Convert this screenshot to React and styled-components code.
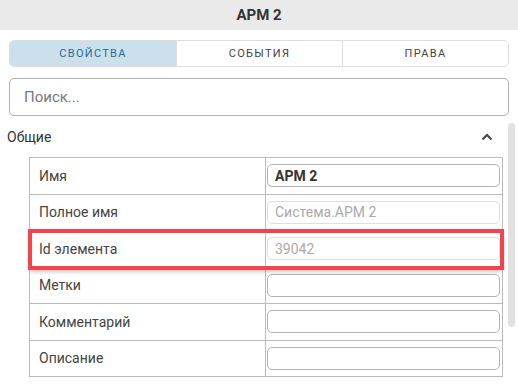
import React from "react";
import styled, { createGlobalStyle } from "styled-components";

const GlobalStyle = createGlobalStyle`
    html, body {
        margin: 0;
        padding: 0;
        background: #fff;
        font-family: Roboto, "Liberation Sans", sans-serif;
        overflow: hidden;
    }
    * {
        box-sizing: border-box;
    }
`;

const Header = styled.div`
    height: 30px;
    background: #eaeaea;
    display: flex;
    align-items: center;
    justify-content: center;
    font-size: 15px;
    font-weight: 700;
    color: #333;
`;
const Top = styled.div`
    padding: 10px 9px 0;
    display: flex;
    flex-direction: column;
    gap: 11px;
`;
const Tabs = styled.div`
    display: grid;
    grid-template-columns: 1fr 1fr 1fr;
    height: 27px;
    border: 1px solid #dddddd;
    border-radius: 5px;
    overflow: hidden;
`;
const Tab = styled.div`
    display: flex;
    align-items: center;
    justify-content: center;
    font-size: 11px;
    letter-spacing: 1.3px;
    text-transform: uppercase;
    color: ${(p) => (p.$active ? "#1e6c9b" : "#444")};
    background: ${(p) => (p.$active ? "#cbe0ea" : "#fff")};
    & + & {
        border-left: 1px solid #dddddd;
    }
`;
const Search = styled.input`
    height: 38px;
    border: 1px solid #b0b0b0;
    border-radius: 5px;
    padding: 0 14px;
    font-family: inherit;
    font-size: 15px;
    color: #333;
    outline: none;
    &::placeholder {
        color: #777;
    }
`;
const ScrollArea = styled.div`
    display: flex;
    margin-top: 7px;
    padding-right: 3px;
`;
const Content = styled.div`
    flex: 1;
    padding-left: 7px;
`;
const Thumb = styled.div`
    width: 7px;
    height: 204px;
    border-radius: 4px;
    background: #e1e1e1;
`;
const SectionHead = styled.div`
    height: 28px;
    display: flex;
    align-items: center;
    justify-content: space-between;
    padding-right: 15px;
    font-size: 14px;
    color: #333;
`;
const Table = styled.div`
    margin: 6px 5px 0 22px;
    border: 1px solid #bbbbbb;
    border-bottom: none;
`;
const Row = styled.div`
    display: grid;
    grid-template-columns: 236px 1fr;
    height: 36.5px;
    border-bottom: 1px solid #bbbbbb;
    position: relative;
    ${(p) =>
        p.$marked &&
        `
        z-index: 1;
        outline: 4px solid #f4434b;
        outline-offset: -2px;
        box-shadow: 0 3px 5px rgba(0, 0, 0, 0.3);
    `}
`;
const Label = styled.div`
    display: flex;
    align-items: center;
    padding-left: 9px;
    border-right: 1px solid #bbbbbb;
    font-size: 14px;
    color: #444;
`;
const Cell = styled.div`
    display: flex;
    align-items: center;
    padding: 0 2px 0 1px;
`;
const Field = styled.input`
    width: 100%;
    height: 23px;
    border-radius: 5px;
    border: 1px solid ${(p) => (p.disabled ? "#dedede" : "#b3b3b3")};
    background: #fff;
    padding: 0 7px;
    font-family: inherit;
    font-size: 14px;
    font-weight: ${(p) => (p.$bold ? 700 : 400)};
    color: ${(p) => (p.disabled ? "#aaa" : "#333")};
    outline: none;
`;

const rows = [
    { label: "Имя", value: "АРМ 2", bold: true },
    { label: "Полное имя", value: "Система.АРМ 2", disabled: true },
    { label: "Id элемента", value: "39042", disabled: true, marked: true },
    { label: "Метки", value: "" },
    { label: "Комментарий", value: "" },
    { label: "Описание", value: "" },
];

function Chevron() {
    return (
        <svg width="12" height="10" viewBox="0 0 12 10">
            <polyline
                points="1.5,7.5 6,3 10.5,7.5"
                fill="none"
                stroke="#444"
                strokeWidth="2"
            />
        </svg>
    );
}

export default function App() {
    return (
        <>
            <GlobalStyle />
            <Header>АРМ 2</Header>
            <Top>
                <Tabs>
                    <Tab $active>Свойства</Tab>
                    <Tab>События</Tab>
                    <Tab>Права</Tab>
                </Tabs>
                <Search placeholder="Поиск..." />
            </Top>
            <ScrollArea>
                <Content>
                    <SectionHead>
                        Общие
                        <Chevron />
                    </SectionHead>
                    <Table>
                        {rows.map((r) => (
                            <Row key={r.label} $marked={r.marked}>
                                <Label>{r.label}</Label>
                                <Cell>
                                    <Field
                                        defaultValue={r.value}
                                        disabled={r.disabled}
                                        $bold={r.bold}
                                    />
                                </Cell>
                            </Row>
                        ))}
                    </Table>
                </Content>
                <Thumb />
            </ScrollArea>
        </>
    );
}
